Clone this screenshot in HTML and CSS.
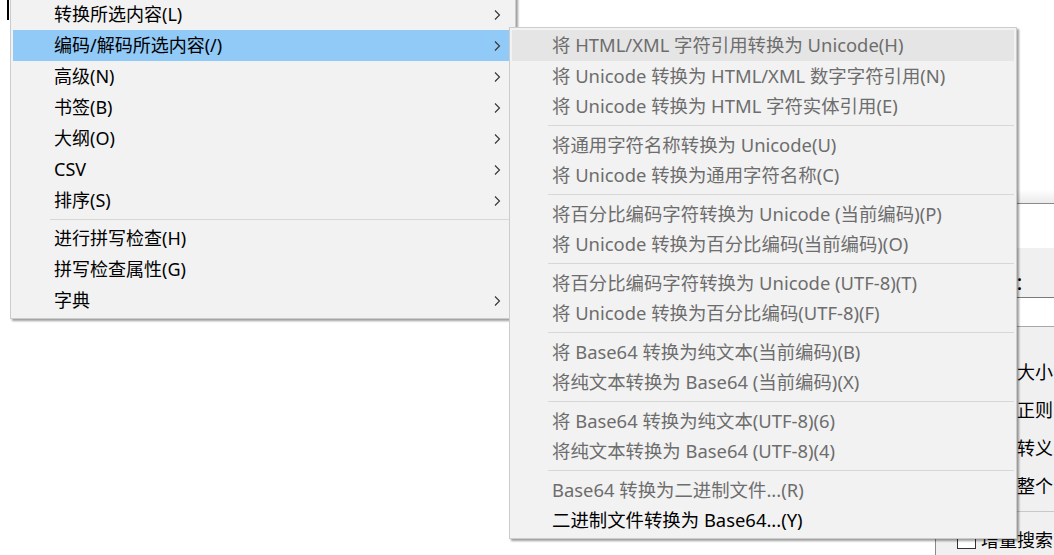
FILE: index.html
```html
<!DOCTYPE html>
<html lang="zh-CN">
<head>
<meta charset="utf-8">
<title>编码/解码所选内容</title>
<link rel="stylesheet" href="styles.css">
</head>
<body>
<div class="stage">
  <div class="caret"></div>

  <div class="dialog">
    <div class="dlg-top"></div>
    <div class="dlg-tabs"></div>
    <div class="dlg-body">
      <div class="dlg-label">查找内容：</div>
      <div class="dlg-input"></div>
      <div class="dlg-opts">
        <div class="opt"><span class="box"></span><span>区分大小</span></div>
        <div class="opt"><span class="box"></span><span>使用正则</span></div>
        <div class="opt"><span class="box"></span><span>支持转义</span></div>
        <div class="opt"><span class="box"></span><span>匹配整个</span></div>
      </div>
      <div class="dlg-line"></div>
      <div class="opt"><span class="box"></span><span>增量搜索</span></div>
    </div>
  </div>

  <div class="menu main">
    <div class="item"><span class="label">转换所选内容(L)</span><svg class="arrow" viewBox="0 0 7 10"><polyline points="1,0.5 5.5,5 1,9.5"/></svg></div>
    <div class="item active"><span class="label">编码/解码所选内容(/)</span><svg class="arrow" viewBox="0 0 7 10"><polyline points="1,0.5 5.5,5 1,9.5"/></svg></div>
    <div class="item"><span class="label">高级(N)</span><svg class="arrow" viewBox="0 0 7 10"><polyline points="1,0.5 5.5,5 1,9.5"/></svg></div>
    <div class="item"><span class="label">书签(B)</span><svg class="arrow" viewBox="0 0 7 10"><polyline points="1,0.5 5.5,5 1,9.5"/></svg></div>
    <div class="item"><span class="label">大纲(O)</span><svg class="arrow" viewBox="0 0 7 10"><polyline points="1,0.5 5.5,5 1,9.5"/></svg></div>
    <div class="item"><span class="label">CSV</span><svg class="arrow" viewBox="0 0 7 10"><polyline points="1,0.5 5.5,5 1,9.5"/></svg></div>
    <div class="item"><span class="label">排序(S)</span><svg class="arrow" viewBox="0 0 7 10"><polyline points="1,0.5 5.5,5 1,9.5"/></svg></div>
    <div class="sep"></div>
    <div class="item"><span class="label">进行拼写检查(H)</span></div>
    <div class="item"><span class="label">拼写检查属性(G)</span></div>
    <div class="item"><span class="label">字典</span><svg class="arrow" viewBox="0 0 7 10"><polyline points="1,0.5 5.5,5 1,9.5"/></svg></div>
  </div>

  <div class="menu sub">
    <div class="item hot disabled"><span class="label">将 HTML/XML 字符引用转换为 Unicode(H)</span></div>
    <div class="item disabled"><span class="label">将 Unicode 转换为 HTML/XML 数字字符引用(N)</span></div>
    <div class="item disabled"><span class="label">将 Unicode 转换为 HTML 字符实体引用(E)</span></div>
    <div class="sep"></div>
    <div class="item disabled"><span class="label">将通用字符名称转换为 Unicode(U)</span></div>
    <div class="item disabled"><span class="label">将 Unicode 转换为通用字符名称(C)</span></div>
    <div class="sep"></div>
    <div class="item disabled"><span class="label">将百分比编码字符转换为 Unicode (当前编码)(P)</span></div>
    <div class="item disabled"><span class="label">将 Unicode 转换为百分比编码(当前编码)(O)</span></div>
    <div class="sep"></div>
    <div class="item disabled"><span class="label">将百分比编码字符转换为 Unicode (UTF-8)(T)</span></div>
    <div class="item disabled"><span class="label">将 Unicode 转换为百分比编码(UTF-8)(F)</span></div>
    <div class="sep"></div>
    <div class="item disabled"><span class="label">将 Base64 转换为纯文本(当前编码)(B)</span></div>
    <div class="item disabled"><span class="label">将纯文本转换为 Base64 (当前编码)(X)</span></div>
    <div class="sep"></div>
    <div class="item disabled"><span class="label">将 Base64 转换为纯文本(UTF-8)(6)</span></div>
    <div class="item disabled"><span class="label">将纯文本转换为 Base64 (UTF-8)(4)</span></div>
    <div class="sep"></div>
    <div class="item disabled"><span class="label">Base64 转换为二进制文件...(R)</span></div>
    <div class="item"><span class="label">二进制文件转换为 Base64...(Y)</span></div>
  </div>
</div>
</body>
</html>
```

FILE: styles.css
```css
html, body {
  margin: 0;
  padding: 0;
  background: #ffffff;
  overflow: hidden;
}

.stage {
  position: relative;
  width: 1054px;
  height: 555px;
  overflow: hidden;
  font-family: "Noto Sans", "Noto Sans CJK SC", sans-serif;
}

.caret {
  position: absolute;
  left: 7px;
  top: 0;
  width: 2px;
  height: 20px;
  background: #000;
}

/* ---------- menus ---------- */
.menu {
  box-sizing: border-box;
  background: #f2f2f2;
  border: 1px solid #cccccc;
  box-shadow: 2px 2px 2px rgba(0, 0, 0, 0.38);
  padding: 2px;
  display: flex;
  flex-direction: column;
}

.main {
  position: relative;
  z-index: 2;
  width: 506px;
  margin: -4px 0 0 10px;
}

.sub {
  position: absolute;
  z-index: 3;
  left: 509px;
  top: 27px;
  width: 508px;
}

.item {
  display: flex;
  align-items: center;
  height: 31px;
  padding-left: 41px;
  padding-right: 12px;
  font-size: 18px;
  line-height: 31px;
  color: #000;
  white-space: nowrap;
}

.sub .item {
  height: 30.7px;
  line-height: 30.7px;
  padding-left: 40px;
  font-size: 18.4px;
}

.item .label {
  flex: 1;
}

.item.active {
  background: #91c9f7;
}

.item.hot {
  background: #e5e5e5;
}

.item.disabled {
  color: #6d6d6d;
}

.arrow {
  width: 7px;
  height: 10px;
  fill: none;
  stroke: #333333;
  stroke-width: 1.1;
}

.sep {
  height: 7px;
  display: flex;
  align-items: center;
  padding-left: 37px;
}

.sep::after {
  content: "";
  flex: 1;
  height: 1px;
  background: #d7d7d7;
}

.sub .sep {
  height: 7.6px;
  padding-left: 36px;
}

/* ---------- dialog behind ---------- */
.dialog {
  position: absolute;
  z-index: 1;
  left: 935px;
  top: 180px;
  width: 200px;
  height: 420px;
  box-sizing: border-box;
  border-left: 1px solid #8a8a8a;
  background: #f0f0f0;
  font-family: "Noto Sans CJK SC", sans-serif;
  font-size: 18px;
  color: #000;
}

.dlg-top {
  height: 23px;
  background: linear-gradient(#ffffff 40%, #ebebeb);
  border-bottom: 1px solid #8a8a8a;
}

.dlg-tabs {
  height: 44px;
  background: #ffffff;
}

.dlg-body {
  padding: 24px 0 0 21px;
  display: flex;
  flex-direction: column;
}

.dlg-label {
  height: 20px;
  line-height: 20px;
  margin-left: -14px;
  white-space: nowrap;
}

.dlg-input {
  height: 28px;
  margin: 5px 0 0 -21px;
  background: #ffffff;
  border-top: 1px solid #7a7a7a;
  border-bottom: 1px solid #a8a8a8;
}

.dlg-opts {
  margin-top: 25px;
  display: flex;
  flex-direction: column;
}

.opt {
  height: 38px;
  display: flex;
  align-items: center;
  gap: 5px;
  white-space: nowrap;
}

.box {
  width: 19px;
  height: 19px;
  box-sizing: border-box;
  border: 1px solid #333333;
  background: #ffffff;
  flex: none;
}

.dlg-line {
  height: 1px;
  margin: 7px 0 8px -21px;
  background: #c8c8c8;
}
```
